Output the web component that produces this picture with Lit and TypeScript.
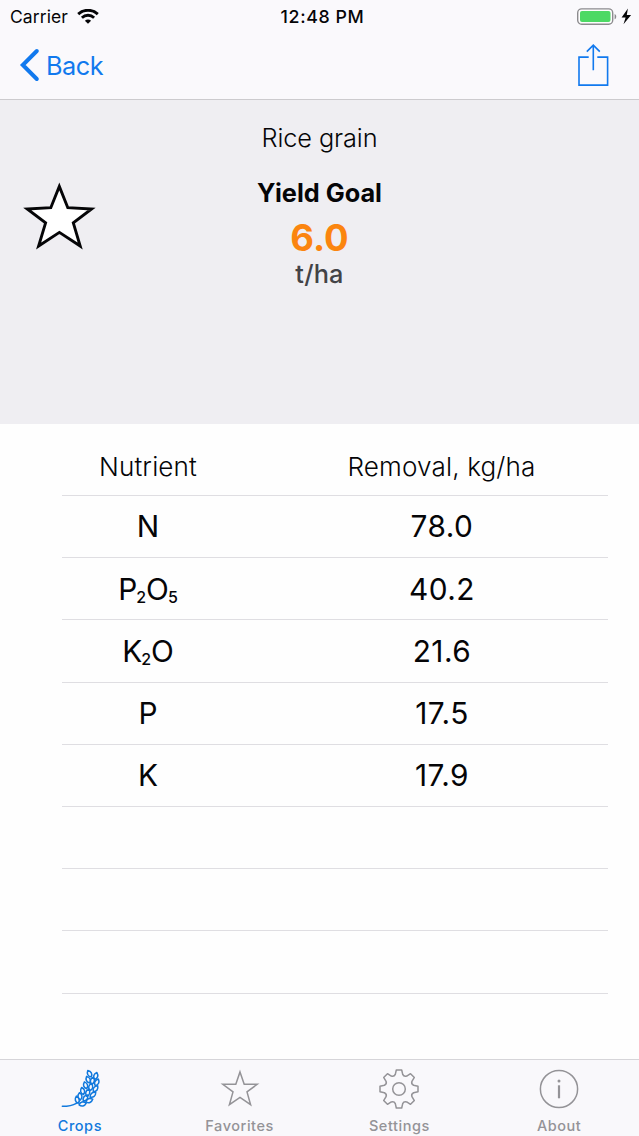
import { LitElement, html, css, svg } from "lit";
import { customElement, property } from "lit/decorators.js";

const LEAF = "M0 -12C8 -5 8 4 0 10C-8 4 -8 -5 0 -12Z";
const LEAVES: [number, number, number][] = [
  [149, 73, -28], [167, 80, 18], [145, 91, -25], [157, 94, 14], [170, 99, 24],
  [137, 108, -18], [152, 113, 12], [166, 118, 36], [128, 125, -14], [143, 130, 16],
  [158, 136, 50], [120, 141, -8], [136, 146, 35], [112, 151, -14], [147, 153, 68], [127, 163, 76],
];

function gearPath(): string {
  const points: string[] = [];
  const at = (angle: number, u: number, v: number) => {
    const x = 20 + u * Math.cos(angle) + v * Math.sin(angle);
    const y = 20 + u * Math.sin(angle) - v * Math.cos(angle);
    return `${x.toFixed(2)} ${y.toFixed(2)}`;
  };
  for (let i = 0; i < 8; i++) {
    const a = (i * Math.PI) / 4;
    points.push(
      `${i ? "L" : "M"}${at(a, -2.7, 19)}L${at(a, 2.7, 19)}L${at(a, 3.7, 14.6)}Q${at(a + Math.PI / 8, 0, 12.9)} ${at(a + Math.PI / 4, -3.7, 14.6)}`
    );
  }
  return points.join("") + "Z";
}

const ICONS: Record<string, unknown> = {
  crops: svg`<svg width="40" height="40" viewBox="60 58 120 120" fill="none" stroke="currentColor" stroke-width="4.6" stroke-linejoin="round" stroke-linecap="round">
    <path d="M67 170C84 170 99 167 109 161"/>
    ${LEAVES.map(([x, y, r]) => svg`<path d=${LEAF} transform="translate(${x} ${y}) rotate(${r})"/>`)}
  </svg>`,
  favorites: svg`<svg width="40" height="40" viewBox="0 0 40 40" fill="none" stroke="currentColor" stroke-width="1.5">
    <path d="M20 2.9L24.2 15.3H37.2L27 22.9L30.6 35.7L20 28.4L9.4 35.7L13 22.9L2.8 15.3H15.8Z"/>
  </svg>`,
  settings: svg`<svg width="40" height="40" viewBox="0 0 40 40" fill="none" stroke="currentColor" stroke-width="1.5" stroke-linejoin="round">
    <path d=${gearPath()}/><circle cx="20" cy="20" r="6.3"/>
  </svg>`,
  about: svg`<svg width="40" height="40" viewBox="0 0 40 40" fill="none" stroke="currentColor" stroke-width="1.5">
    <circle cx="20" cy="20" r="18.6"/><path d="M20 16.3V29.3" stroke-width="2.2"/><circle cx="20" cy="12" r="1.5" fill="currentColor" stroke="none"/>
  </svg>`,
};

@customElement("tab-item")
class TabItem extends LitElement {
  @property() label = "";
  @property() icon = "";
  static styles = css`
    :host { display: flex; flex-direction: column; align-items: center; padding-top: 9px; }
    svg { display: block; }
    .label { font-size: 14.5px; font-weight: 500; line-height: 20px; margin-top: 7px; letter-spacing: 0.55px; }
  `;
  render() {
    return html`${ICONS[this.icon]}<span class="label">${this.label}</span>`;
  }
}

@customElement("app-root")
class AppRoot extends LitElement {
  rows: [string, string][] = [
    ["N", "78.0"], ["P2O5", "40.2"], ["K2O", "21.6"], ["P", "17.5"], ["K", "17.9"],
    ["", ""], ["", ""], ["", ""],
  ];
  static styles = css`
    :host { display: flex; flex-direction: column; height: 1136px; background: #fefefe; color: #050507;
      font-family: Inter, "Liberation Sans", sans-serif; overflow: hidden; }
    svg { display: block; }
    .top { height: 98.6px; background: #faf9fc; border-bottom: 1px solid #cccbce; box-sizing: content-box; }
    .status { display: grid; grid-template-columns: 1fr auto 1fr; height: 33px; align-items: center; padding: 0 7px 0 10px; }
    .carrier { display: flex; align-items: center; gap: 9px; font-size: 17.5px; letter-spacing: 0.08px; }
    .time { font-size: 17.8px; font-weight: 550; padding-left: 3px; letter-spacing: 0.6px; }
    .power { display: flex; justify-content: flex-end; }
    .nav { display: flex; justify-content: space-between; height: 65px; padding: 0 30px 0 19px; }
    .back { display: flex; align-items: center; gap: 6px; height: 64px; color: #1179ee; font-size: 25.3px; letter-spacing: -0.45px; }
    .share { color: #1179ee; padding-top: 10px; }
    .hero { height: 324.4px; background: #efeef2; display: grid; grid-template-columns: 120px 1fr 120px; }
    .star { padding: 80px 0 0 20px; }
    .goal { display: flex; flex-direction: column; align-items: center; padding-top: 18px; }
    .crop { font-size: 25.3px; font-weight: 300; line-height: 40px; letter-spacing: -0.1px; }
    .title { font-size: 25.3px; font-weight: 700; line-height: 30px; margin-top: 20px; }
    .value { font-size: 36.5px; font-weight: 700; line-height: 44px; margin-top: 8px; color: #fb850f; }
    .unit { font-size: 25.3px; font-weight: 500; line-height: 30px; color: #434346; margin-top: -1px; letter-spacing: 0.2px; }
    .table { flex: 1; padding: 9.4px 31px 0 62px; }
    .row { display: grid; grid-template-columns: 172px 1fr; column-gap: 41px; height: 62.22px; box-sizing: border-box;
      border-bottom: 1px solid #dfdee2; align-items: center; text-align: center; font-size: 29.8px; line-height: 36px; }
    .amount { letter-spacing: 0.5px; padding-left: 1px; }
    .sub { font-size: 16px; font-weight: 550; line-height: 0; position: relative; top: 3.5px; margin-left: -1px; }
    .head { font-size: 26.1px; font-weight: 300; height: 62.5px; padding-top: 5px; letter-spacing: 0.13px; }
    .tabs { height: 76px; background: #f9f8fb; border-top: 1px solid #d6d5d9; display: grid;
      grid-template-columns: repeat(4, 1fr); color: #949397; }
    .active { color: #1179dd; }
  `;
  formula(name: string) {
    return name.split("").map((c) => (/\d/.test(c) ? html`<span class="sub">${c}</span>` : c));
  }
  render() {
    return html`
      <div class="top">
        <div class="status">
          <div class="carrier"><span>Carrier</span>
            <svg width="22" height="16" viewBox="0 0 22 16" fill="none" stroke="currentColor" stroke-width="2.9">
              <path d="M1.2 5.1C6.8 0 15.2 0 20.8 5.1M4.9 8.7C8.4 5.5 13.6 5.5 17.1 8.7"/>
              <path d="M11 14.8L7.9 11.7C9.6 10.1 12.4 10.1 14.1 11.7Z" fill="currentColor" stroke="none"/>
            </svg>
          </div>
          <div class="time">12:48 PM</div>
          <div class="power">
            <svg width="56" height="18" viewBox="0 0 56 18">
              <rect x="1.7" y="0.9" width="35" height="15.4" rx="4" fill="#fdfdfd" stroke="#8c8b8e" stroke-width="1.4"/>
              <rect x="4" y="3.1" width="30.5" height="11" rx="2" fill="#4cd964"/>
              <path d="M38.6 5.9C40.8 6.7 40.8 10.5 38.6 11.3Z" fill="#8c8b8e"/>
              <path d="M51.9 0.6L45.6 9.4H49.6L47.5 16.2L55.1 7H50.8Z" fill="#050507"/>
            </svg>
          </div>
        </div>
        <div class="nav">
          <div class="back">
            <svg width="21" height="34" viewBox="0 0 21 34" fill="none" stroke="currentColor" stroke-width="4" stroke-linecap="round" stroke-linejoin="miter">
              <path d="M17.8 3L3.8 17L17.8 31"/>
            </svg><span>Back</span>
          </div>
          <div class="share">
            <svg width="32" height="44" viewBox="0 0 32 44" fill="none" stroke="currentColor" stroke-width="1.6">
              <path d="M11.7 14.1H2V42.1H30.6V14.1H20.3M16.3 27.3V2.3M9.8 8.6L16.3 2.1L22.8 8.6"/>
            </svg>
          </div>
        </div>
      </div>
      <div class="hero">
        <div class="star">
          <svg width="80" height="72" viewBox="0 0 80 72" fill="#fff" stroke="#050507" stroke-width="2.9" stroke-miterlimit="8">
            <path d="M39.3 6.4L47.8 27.7L71.6 29L53.3 42.9L60.2 66L39.4 52.4L18.6 66L25.6 42.9L7.2 29L30.8 27.7Z"/>
          </svg>
        </div>
        <div class="goal">
          <div class="crop">Rice grain</div>
          <div class="title">Yield Goal</div>
          <div class="value">6.0</div>
          <div class="unit">t/ha</div>
        </div>
      </div>
      <div class="table">
        <div class="row head"><span>Nutrient</span><span>Removal, kg/ha</span></div>
        ${this.rows.map(([name, amount]) => html`<div class="row"><span>${this.formula(name)}</span><span class="amount">${amount}</span></div>`)}
      </div>
      <div class="tabs">
        <tab-item class="active" label="Crops" icon="crops"></tab-item>
        <tab-item label="Favorites" icon="favorites"></tab-item>
        <tab-item label="Settings" icon="settings"></tab-item>
        <tab-item label="About" icon="about"></tab-item>
      </div>
    `;
  }
}
